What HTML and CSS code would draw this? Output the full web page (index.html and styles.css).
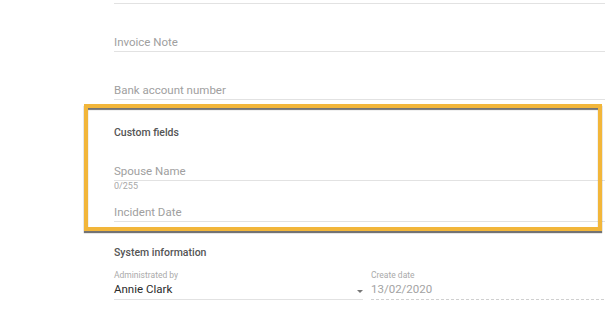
FILE: index.html
```html
<!DOCTYPE html>
<html lang="en">
<head>
  <meta charset="UTF-8">
  <meta name="viewport" content="width=device-width, initial-scale=1.0">
  <title>Contact form</title>
  <link rel="stylesheet" href="styles.css">
</head>
<body>

  <div class="page">
    <form class="form">
      <div class="field top"></div>

      <div class="field">
        <span class="placeholder">Invoice Note</span>
      </div>

      <div class="field">
        <span class="placeholder">Bank account number</span>
      </div>

      <section class="custom">
        <h3 class="section-title">Custom fields</h3>
        <div class="field spouse">
          <span class="placeholder">Spouse Name</span>
        </div>
        <div class="counter">0/255</div>
        <div class="field incident">
          <span class="placeholder">Incident Date</span>
        </div>
      </section>

      <section class="system">
        <h3 class="section-title">System information</h3>
        <div class="system-row">
          <div class="sys-field">
            <label class="small-label">Administrated by</label>
            <div class="select">
              <span class="value">Annie Clark</span>
              <span class="caret"></span>
            </div>
          </div>
          <div class="sys-field">
            <label class="small-label">Create date</label>
            <div class="readonly">13/02/2020</div>
          </div>
        </div>
      </section>
    </form>

    <div class="highlight"></div>
  </div>

</body>
</html>
```

FILE: styles.css
```css
* {
  margin: 0;
  padding: 0;
  box-sizing: border-box;
}

body {
  font-family: Roboto, "Liberation Sans", Arial, sans-serif;
  background: #fff;
  overflow: hidden;
  width: 605px;
  height: 333px;
}

.page {
  position: relative;
  width: 605px;
  height: 333px;
  overflow: hidden;
}

.form {
  margin-left: 114px;
  width: 540px;
}

.field {
  padding-top: 31px;
  padding-bottom: 2px;
  line-height: 14px;
  font-size: 11.5px;
  border-bottom: 1px solid #e2e2e2;
}

.field.top {
  padding: 0;
  height: 4px;
}

.placeholder {
  color: #a0a0a0;
}

.section-title {
  font-size: 10.5px;
  font-weight: 500;
  line-height: 13px;
  color: #555;
}

.custom .section-title {
  margin-top: 26px;
}

.field.spouse {
  padding-top: 25px;
}

.counter {
  font-size: 9px;
  line-height: 10px;
  color: #a8a8a8;
}

.field.incident {
  padding-top: 14px;
}

.system .section-title {
  margin-top: 24px;
}

.system-row {
  display: grid;
  grid-template-columns: 249px 1fr;
  column-gap: 8px;
  margin-top: 11px;
}

.small-label {
  display: block;
  font-size: 8.5px;
  line-height: 10px;
  color: #aaa;
}

.select {
  display: flex;
  justify-content: space-between;
  align-items: center;
  margin-top: 2px;
  padding-bottom: 3px;
  line-height: 14px;
  font-size: 11.5px;
  border-bottom: 1px solid #e2e2e2;
}

.value {
  color: #2b2b2b;
}

.caret {
  width: 0;
  height: 0;
  margin-top: 4px;
  border-left: 3px solid transparent;
  border-right: 3px solid transparent;
  border-top: 3px solid #777;
}

.readonly {
  margin-top: 2px;
  padding-bottom: 3px;
  line-height: 14px;
  font-size: 11.5px;
  color: #a3a3a3;
  border-bottom: 1px dashed #d0d0d0;
}

/* annotation box drawn over the custom fields */
.highlight {
  position: absolute;
  left: 84px;
  top: 104px;
  width: 518px;
  height: 127px;
  border: 4px solid #f2b63a;
  box-shadow: 0 2px 1px rgba(0, 0, 0, 0.55), inset 0 2px 1px rgba(0, 0, 0, 0.55);
  pointer-events: none;
}
```
